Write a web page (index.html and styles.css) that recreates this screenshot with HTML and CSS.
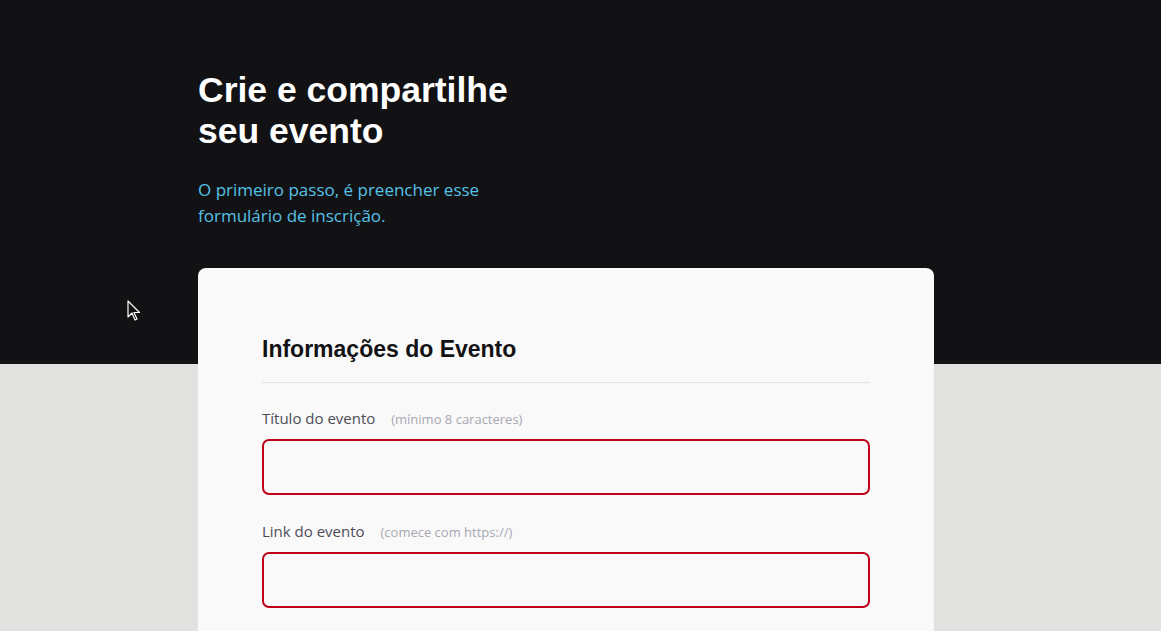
FILE: index.html
```html
<!DOCTYPE html>
<html lang="pt-BR">
<head>
<meta charset="utf-8">
<title>Crie e compartilhe seu evento</title>
<link rel="stylesheet" href="styles.css">
</head>
<body>
<main class="page">
  <div class="container">
    <header class="hero">
      <h1 class="hero-title">Crie e compartilhe<br>seu evento</h1>
      <p class="hero-sub">O primeiro passo, é preencher esse<br>formulário de inscrição.</p>
    </header>
    <form class="card">
      <h2 class="card-title">Informações do Evento</h2>
      <div class="field">
        <label class="label">Título do evento <span class="hint">(mínimo 8 caracteres)</span></label>
        <input class="input" type="text">
      </div>
      <div class="field">
        <label class="label">Link do evento <span class="hint">(comece com https://)</span></label>
        <input class="input" type="text">
      </div>
    </form>
  </div>
  <svg class="cursor" width="14" height="22" viewBox="0 0 14 22"><path d="M1 1 L1 17 L5 13 L8 20 L10 19 L7 12.5 L12.5 12.5 Z" fill="#121214" stroke="#fff" stroke-width="1.2" stroke-linejoin="round"/></svg>
</main>
</body>
</html>
```
FILE: styles.css
```css
* { box-sizing: border-box; }
html, body { margin: 0; padding: 0; }
body {
  background: #e1e1e0;
  font-family: "Open Sans", "Liberation Sans", sans-serif;
}
.page {
  position: relative;
  min-height: 631px;
  background: linear-gradient(#121214 0, #121214 364px, #e1e1e0 364px);
  overflow: hidden;
}
.container {
  width: 736px;
  margin-left: 198px;
  padding-top: 70px;
}
.hero-title {
  margin: 0;
  font-family: "Liberation Sans", Arial, sans-serif;
  font-weight: 700;
  font-size: 35.5px;
  line-height: 41px;
  color: #ffffff;
  letter-spacing: 0;
}
.hero-sub {
  margin: 25px 0 0;
  font-size: 17px;
  line-height: 26px;
  color: #56c1e6;
}
.card {
  margin-top: 39px;
  background: #f9f9f9;
  border-radius: 8px;
  padding: 66px 64px 40px;
  min-height: 400px;
}
.card-title {
  margin: 0;
  padding-bottom: 17px;
  border-bottom: 1px solid #e1e1e6;
  font-family: "Liberation Sans", Arial, sans-serif;
  font-weight: 700;
  font-size: 23px;
  line-height: 31px;
  color: #121214;
}
.field { margin-top: 24px; }
.card-title + .field { margin-top: 23px; }
.label {
  display: block;
  font-size: 15px;
  line-height: 24px;
  color: #4d4d57;
}
.hint {
  margin-left: 12px;
  font-size: 13px;
  color: #a8a8b3;
}
.input {
  display: block;
  width: 100%;
  height: 56px;
  margin-top: 8px;
  border: 2px solid #c0001a;
  border-radius: 7px;
  background: #f9f9f9;
  outline: none;
}
.cursor {
  position: absolute;
  left: 127px;
  top: 300px;
}
```
